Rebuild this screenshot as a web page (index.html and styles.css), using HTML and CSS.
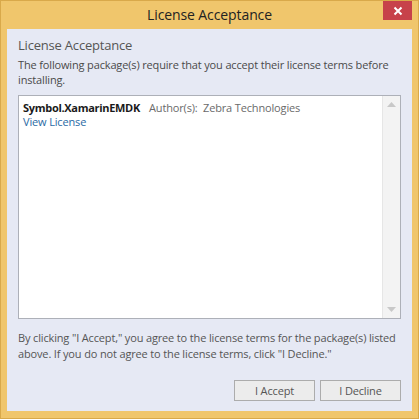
FILE: index.html
```html
<!DOCTYPE html>
<html>
<head>
<meta charset="utf-8">
<link rel="stylesheet" href="styles.css">
</head>
<body>
<div class="window">
  <div class="titlebar">
    <div class="title">License Acceptance</div>
    <div class="close">
      <svg width="10" height="10" viewBox="0 0 10 10"><path d="M1.5 1.5 L8.5 8.5 M8.5 1.5 L1.5 8.5" stroke="#fff" stroke-width="2"/></svg>
    </div>
  </div>
  <div class="client">
    <div class="heading">License Acceptance</div>
    <div class="intro">The following package(s) require that you accept their license terms before installing.</div>
    <div class="listbox">
      <div class="items">
        <div class="item">
          <div class="line"><span class="pkg">Symbol.XamarinEMDK</span><span class="author">Author(s):&nbsp; Zebra Technologies</span></div>
          <a class="link">View License</a>
        </div>
      </div>
      <div class="scrollbar">
        <div class="arrow up"><svg width="9" height="5" viewBox="0 0 9 5"><path d="M0 5 L4.5 0 L9 5 Z" fill="#c8c8c8"/></svg></div>
        <div class="track"></div>
        <div class="arrow down"><svg width="9" height="5" viewBox="0 0 9 5"><path d="M0 0 L4.5 5 L9 0 Z" fill="#c8c8c8"/></svg></div>
      </div>
    </div>
    <div class="notice">By clicking "I Accept," you agree to the license terms for the package(s) listed above. If you do not agree to the license terms, click "I Decline."</div>
    <div class="buttons">
      <button class="btn">I Accept</button>
      <button class="btn">I Decline</button>
    </div>
  </div>
</div>
</body>
</html>
```
FILE: styles.css
```css
html, body {
  margin: 0;
  padding: 0;
  background: #ffffff;
}
body {
  font-family: "Open Sans", "Noto Sans", sans-serif;
}
.window {
  width: 419px;
  height: 419px;
  box-sizing: border-box;
  background: #f0c66c;
  border: 1px solid #d9a94a;
  display: flex;
  flex-direction: column;
  padding: 0 6px 7px 6px;
}
.titlebar {
  height: 28px;
  flex: none;
  display: flex;
  align-items: flex-start;
  justify-content: center;
  position: relative;
}
.title {
  font-size: 14px;
  color: #222;
  line-height: 27px;
  letter-spacing: -0.1px;
}
.close {
  position: absolute;
  right: 0;
  top: 0;
  width: 29px;
  height: 19px;
  background: #c7424a;
  display: flex;
  align-items: center;
  justify-content: center;
}
.close svg { display: block; }
.client {
  flex: 1;
  background: #e6e9f4;
  display: flex;
  flex-direction: column;
  padding: 6px 11px 10px 11px;
  color: #4a4a4a;
}
.heading {
  font-size: 13px;
  line-height: 20px;
  color: #555;
  letter-spacing: -0.2px;
}
.intro {
  font-size: 11px;
  line-height: 15px;
  margin-top: 2px;
  color: #4a4a4a;
  letter-spacing: -0.15px;
}
.listbox {
  margin-top: 8px;
  height: 224px;
  background: #fff;
  border: 1px solid #adb0b8;
  display: flex;
  box-sizing: border-box;
}
.items {
  flex: 1;
  padding: 4px 4px;
}
.line {
  font-size: 11px;
  line-height: 15px;
  letter-spacing: -0.15px;
}
.pkg {
  font-weight: bold;
  color: #1a1a1a;
  margin-right: 9px;
  letter-spacing: -0.3px;
}
.author {
  color: #6a6a6a;
}
.link {
  display: block;
  font-size: 11px;
  line-height: 14px;
  color: #2a6aa5;
  letter-spacing: -0.15px;
}
.scrollbar {
  width: 17px;
  background: #f3f3f3;
  border-left: 1px solid #e6e6e6;
  display: flex;
  flex-direction: column;
}
.arrow {
  height: 17px;
  display: flex;
  align-items: center;
  justify-content: center;
}
.track { flex: 1; }
.notice {
  margin-top: 11px;
  font-size: 11px;
  line-height: 16px;
  color: #555;
  letter-spacing: -0.15px;
}
.buttons {
  margin-top: auto;
  display: flex;
  justify-content: flex-end;
  gap: 5px;
}
.btn {
  width: 81px;
  height: 21px;
  background: #ececec;
  border: 1px solid #acacac;
  font-family: "Open Sans", "Noto Sans", sans-serif;
  font-size: 11px;
  color: #555;
  padding: 0;
  letter-spacing: -0.15px;
}
```
